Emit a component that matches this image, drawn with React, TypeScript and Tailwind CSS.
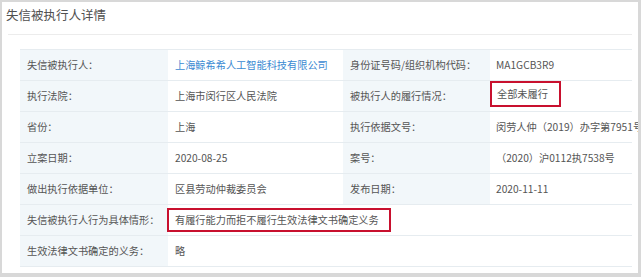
import React from 'react';

const font = { fontFamily: '"Microsoft YaHei", "Noto Sans CJK SC", "Noto Sans", sans-serif' };

function Label({ children }: { children: React.ReactNode }) {
  return (
    <div className="flex h-[31px] items-center border-b border-[#e6ecf0] bg-[#f2f7fa] pl-[7px] text-[10.2px] text-[#555]">
      {children}
    </div>
  );
}

function Value({ children, span = false }: { children: React.ReactNode; span?: boolean }) {
  return (
    <div
      className={`flex h-[31px] items-center whitespace-nowrap border-b border-[#e6ecf0] bg-white pl-[7px] text-[10.2px] text-[#555] ${
        span ? 'col-span-3' : ''
      }`}
    >
      {children}
    </div>
  );
}

export default function App() {
  return (
    <div
      className="h-[277px] w-[641px] overflow-hidden border-t-2 border-l-2 border-r-[3px] border-b-[4px] border-[#d8d8d8] bg-white"
      style={font}
    >
      <div className="flex h-[27px] items-center pl-[4px] text-[12.5px] text-[#505050]">失信被执行人详情</div>
      <div className="ml-[6px] mr-[6px] mt-[5px] border-t border-[#ececec]" />
      <div className="ml-[18px] mt-[14px] grid w-[612px] grid-cols-[148px_175px_147px_142px] border-t border-r border-[#e6ecf0]">
        <Label>失信被执行人：</Label>
        <Value>
          <span className="text-[#3b8ad2]">上海鲸希希人工智能科技有限公司</span>
        </Value>
        <Label>身份证号码/组织机构代码：</Label>
        <Value>
          <span className="-ml-[1px]">MA1GCB3R9</span>
        </Value>

        <Label>执行法院：</Label>
        <Value>上海市闵行区人民法院</Value>
        <Label>被执行人的履行情况：</Label>
        <div className="flex h-[31px] items-start border-b border-[#e6ecf0] bg-white">
          <div className="flex h-[26px] w-[71px] items-center border-2 border-[#c8102e] pl-[5px] text-[10.2px] text-[#555]">
            全部未履行
          </div>
        </div>

        <Label>省份：</Label>
        <Value>上海</Value>
        <Label>执行依据文号：</Label>
        <Value>
          <span className="-ml-[1px]">闵劳人仲（2019）办字第7951号</span>
        </Value>

        <Label>立案日期：</Label>
        <Value>2020-08-25</Value>
        <Label>案号：</Label>
        <Value>
          <span className="-ml-[1px]">（2020）沪0112执7538号</span>
        </Value>

        <Label>做出执行依据单位：</Label>
        <Value>区县劳动仲裁委员会</Value>
        <Label>发布日期：</Label>
        <Value>
          <span className="-ml-[1px]">2020-11-11</span>
        </Value>

        <Label>失信被执行人行为具体情形：</Label>
        <div className="col-span-3 flex h-[31px] items-center border-b border-[#e6ecf0] bg-white">
          <div className="-ml-[1px] flex h-[24px] w-[224px] items-center border-2 border-[#c8102e] pl-[6px] text-[10.2px] text-[#555]">
            有履行能力而拒不履行生效法律文书确定义务
          </div>
        </div>

        <Label>生效法律文书确定的义务：</Label>
        <Value span>略</Value>
      </div>
    </div>
  );
}
